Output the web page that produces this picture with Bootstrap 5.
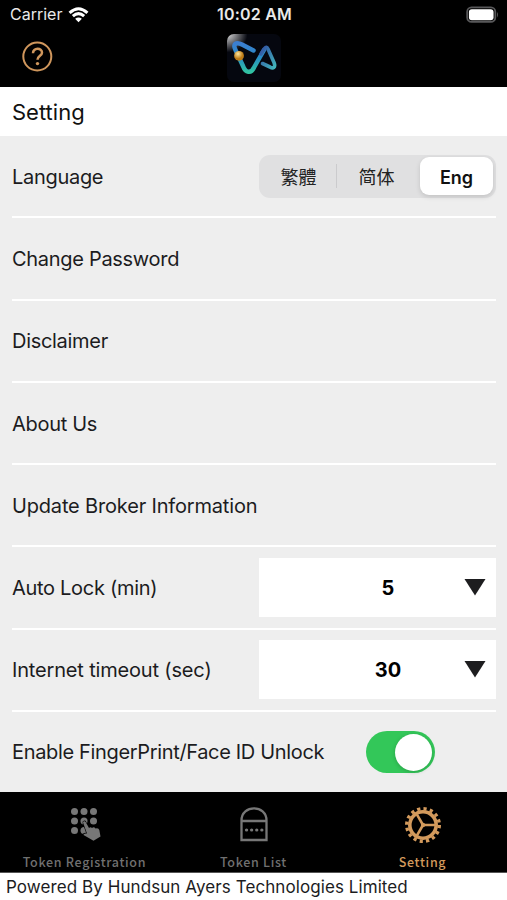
<!DOCTYPE html>
<html lang="en">
<head>
<meta charset="utf-8">
<meta name="viewport" content="width=device-width, initial-scale=1">
<title>Setting</title>
<link rel="stylesheet" href="https://cdn.jsdelivr.net/npm/bootstrap@5.3.0/dist/css/bootstrap.min.css">
<style>
body{font-family:Inter,"Noto Sans CJK SC",sans-serif;color:#1c1c1e;height:900px;overflow:hidden;line-height:1.2}
svg{display:block;flex:none}
.status-row{height:30px;font-size:16px;color:#e9e9e9}
.status-row>div{flex:1 1 0}
.carrier-side{padding-left:10px}
.wifi{margin-left:6px}
.clock{letter-spacing:.2px}
.brand-row{height:57px}
.help-link{padding:11px 0 0 22px}
.brand-side{flex:0 0 227px}
.brand-logo{margin-top:4px}
.page-title{height:49px;font-size:22px;color:#111;padding:1px 0 0 12px}
.settings{background:#eee;height:656px;font-size:20px;letter-spacing:-.3px;padding:0 11px 0 12px}
.setting-row{height:82.3px;border-bottom:2px solid #fff}
.setting-row:last-child{border-bottom:0;letter-spacing:-.34px;padding-bottom:2px}
.setting-row>.row-label{padding-top:1px}
.relaxed{letter-spacing:-.17px}
.lang{width:237px;height:43px;background:#e0e0e1;border-radius:11px;padding:2px 3px;font-size:18px}
.lang button{border:0;background:none;padding:0;color:#222;flex:0 0 73px}
.lang .cjk-label{font-family:"Noto Sans CJK SC",sans-serif;line-height:1;letter-spacing:0}
.lang .divider{width:1px;height:24px;background:#cbcbcd;margin-left:1px;margin-right:3px}
.lang .chosen{height:38px;background:#fff;border-radius:9px;font-weight:600;color:#111;box-shadow:0 2px 5px #0002;padding-top:3px;margin-left:auto}
.picker{width:237px;height:59px;background:#fff;font-weight:700;color:#000;padding-left:53px;padding-right:10px;letter-spacing:0}
.toggle{width:69px;height:42px;border-radius:21px;background:#33c759;padding:3px;margin-right:61px}
.knob{width:37px;height:37px;border-radius:50%;background:#fff;box-shadow:0 1px 4px #0003}
.tabs{height:81px;font-family:"Noto Sans CJK SC",sans-serif;font-size:12.5px;font-weight:500;letter-spacing:.68px;color:#707070;border-bottom:1px solid #555}
.tabs a{flex:1 1 0;color:inherit;padding-top:14px}
.tabs .current{color:#d39a5c}
.tabs span{line-height:16px;margin-top:10px;white-space:nowrap}
.footer-note{height:27px;font-size:17px;letter-spacing:.08px;padding:1px 0 0 6px}
</style>
<script src="https://cdn.jsdelivr.net/npm/bootstrap@5.3.0/dist/js/bootstrap.bundle.min.js"></script>
</head>
<body class="bg-white d-flex flex-column m-0">
<header class="bg-black">
  <div class="status-row d-flex align-items-center">
    <div class="carrier-side d-flex align-items-center"><span>Carrier</span>
      <svg class="wifi" width="21" height="16" viewBox="0 0 22 17"><g fill="none" stroke="#fff" stroke-width="3.2"><path d="M1.5 6.2Q11-2.5 20.5 6.2M5 9.8Q11 4.2 17 9.8"/></g><path d="M7.4 12.6Q11 9.6 14.6 12.6L11 16.2Z" fill="#fff"/></svg>
    </div>
    <span class="clock fw-semibold">10:02 AM</span>
    <div class="d-flex justify-content-end pe-2"><svg width="33" height="18" viewBox="0 0 34 18"><rect x="1.2" y="1.2" width="29" height="15" rx="4.5" fill="#000" stroke="#58585a" stroke-width="1.8"/><rect x="3" y="3" width="25.4" height="11.4" rx="3" fill="#fff"/><path d="M32 6q2 2.8 0 5.6z" fill="#58585a"/></svg></div>
  </div>
  <div class="brand-row d-flex">
    <div class="brand-side"><div class="help-link"><svg width="31" height="31" viewBox="0 0 31 31" fill="none" stroke="#cf965c"><circle cx="15.3" cy="15.5" r="14" stroke-width="2"/><path d="M11 12.2C10.8 6.4 20.200 6.4 20 11.8C20 14.8 15.5 15 15.5 18.8" stroke-width="2.500"/><circle cx="15.5" cy="22.6" r="1.7" fill="#cf965c" stroke="none"/></svg></div></div>
    <svg class="brand-logo" width="54" height="48" viewBox="0 0 54 48">
      <defs><radialGradient id="glow" cx="0" cy="0" r=".38"><stop stop-color="#ddd"/><stop offset="1" stop-color="#05070f"/></radialGradient>
      <linearGradient id="ribbon" x1="0" y1="0" x2="0" y2="1"><stop stop-color="#3b7ed0"/><stop offset=".5" stop-color="#278cc4"/><stop offset="1" stop-color="#31c2a2"/></linearGradient>
      <linearGradient id="ribbonEnd" x1="0" y1="0" x2="1" y2="1"><stop stop-color="#3151a4"/><stop offset="1" stop-color="#42b5bb"/></linearGradient>
      <radialGradient id="gold" cx=".4" cy=".3"><stop stop-color="#ffe69a"/><stop offset="1" stop-color="#bd7b16"/></radialGradient></defs>
      <rect width="54" height="48" rx="7" fill="url(#glow)"/>
      <g fill="none" stroke-linecap="round" stroke-linejoin="round">
      <path d="M26.500 16.500L15 10.500C9 7.500 5.500 10 8.500 16L16 32C18.500 39 24 40 27 33.500L37 16" stroke="url(#ribbon)" stroke-width="4.500"/>
      <path d="M34 20L37.500 14.500Q39.500 12 41 15L47 28.500C49 33.500 46 35 43 33L35.500 29.500" stroke="url(#ribbonEnd)" stroke-width="3.600"/></g>
      <circle cx="12" cy="21.800" r="4.900" fill="url(#gold)"/>
    </svg>
  </div>
</header>
<h1 class="page-title d-flex align-items-center fw-normal m-0">Setting</h1>
<main class="settings">
  <div class="setting-row d-flex align-items-center justify-content-between"><span class="row-label">Language</span>
    <div class="lang d-flex align-items-center"><button class="cjk-label" lang="zh-Hant">繁體</button><i class="divider"></i><button class="cjk-label" lang="zh-Hans">简体</button><button class="chosen">Eng</button></div></div>
  <div class="setting-row d-flex align-items-center"><span class="row-label">Change Password</span></div>
  <div class="setting-row d-flex align-items-center"><span class="row-label">Disclaimer</span></div>
  <div class="setting-row d-flex align-items-center"><span class="row-label">About Us</span></div>
  <div class="setting-row d-flex align-items-center"><span class="row-label relaxed">Update Broker Information</span></div>
  <div class="setting-row d-flex align-items-center justify-content-between"><span class="row-label">Auto Lock (min)</span>
    <div class="picker d-flex align-items-center"><span class="flex-fill text-center">5</span><svg width="22" height="17" viewBox="0 0 22 17"><path d="M.5 0h21L11 16.500z" fill="#1d1d1f"/></svg></div></div>
  <div class="setting-row d-flex align-items-center justify-content-between"><span class="row-label relaxed">Internet timeout (sec)</span>
    <div class="picker d-flex align-items-center"><span class="flex-fill text-center">30</span><svg width="22" height="17" viewBox="0 0 22 17"><path d="M.5 0h21L11 16.500z" fill="#1d1d1f"/></svg></div></div>
  <div class="setting-row d-flex align-items-center justify-content-between"><span>Enable FingerPrint/Face ID Unlock</span>
    <div class="toggle d-flex justify-content-end align-items-center"><div class="knob"></div></div></div>
</main>
<nav class="tabs bg-black d-flex">
  <a class="d-flex flex-column align-items-center text-decoration-none" href="#"><svg width="36" height="38" viewBox="0 0 36 38"><g fill="#777"><circle cx="7.500" cy="5.500" r="3.500"/><circle cx="17" cy="5.500" r="3.500"/><circle cx="26.500" cy="5.500" r="3.500"/><circle cx="7.500" cy="15" r="3.500"/><circle cx="17" cy="15" r="3.500"/><circle cx="26.500" cy="15" r="3.500"/><circle cx="7.500" cy="24.500" r="3.500"/><circle cx="17" cy="24.500" r="3.500"/></g><path d="M16.200 17C15.700 15 18 14.500 18.800 16.200L22 22Q23.500 20.500 25 22Q27 20.500 28.500 22.500Q31.500 21.500 32.300 24L33.500 30.500L26.500 34.800L20 31L16.500 29Q16.200 27 20 27.500Z" fill="#777" stroke="#000" stroke-width="1.200" paint-order="stroke"/></svg><span>Token Registration</span></a>
  <a class="d-flex flex-column align-items-center text-decoration-none" href="#"><svg width="30" height="38" viewBox="0 0 30 38"><path d="M2.500 34V14.500C2.500-1.700 27.500-1.700 27.500 14.500V34ZM2.500 15H27.500" fill="none" stroke="#777" stroke-width="2.300"/><path d="M7.500 24h16" stroke="#777" stroke-width="3.200" stroke-linecap="round" stroke-dasharray=".1 5"/></svg><span>Token List</span></a>
  <a class="current d-flex flex-column align-items-center text-decoration-none" href="#"><svg width="38" height="38" viewBox="-19 -19 38 38" fill="none" stroke="#d39a5c"><circle r="16.300" stroke-width="3.400" stroke-dasharray="3.200 3.201"/><circle r="13.200" stroke-width="3.600"/><circle r="2.200" fill="#d39a5c" stroke="none"/><path d="M0 0H12M0 0L-6-10.400M0 0L-6 10.400" stroke-width="2.600"/></svg><span>Setting</span></a>
</nav>
<footer class="footer-note d-flex align-items-center"><span>Powered By Hundsun Ayers Technologies Limited</span></footer>
</body>
</html>
